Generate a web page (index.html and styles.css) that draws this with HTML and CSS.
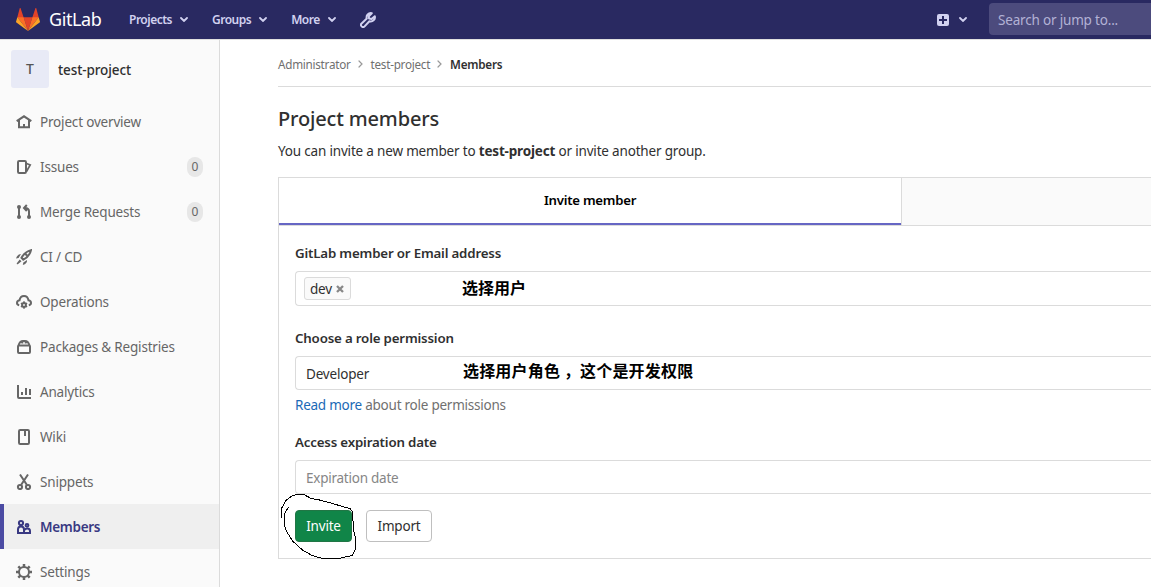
FILE: index.html
```html
<!DOCTYPE html>
<html lang="en">
<head>
<meta charset="utf-8">
<title>Members · test-project · GitLab</title>
<link rel="stylesheet" href="styles.css">
</head>
<body>
<div class="page">
<header class="navbar">
  <a class="brand">
    <svg class="tanuki" width="24" height="24" viewBox="0 0 36 36"><path fill="#e24329" d="M2 14l9.4 9v-9L7 .7c-.2-.7-1.200-.7-1.500 0z"/><path fill="#e24329" d="M34 14l-9.400 9v-9L29 .7c.2-.7 1.200-.7 1.500 0z"/><path fill="#e24329" d="M18 34.400L11.400 14h13.200z"/><path fill="#fc6d26" d="M18 34.400L11.400 14H2z"/><path fill="#fc6d26" d="M18 34.400L24.600 14H34z"/><path fill="#fca326" d="M2 14L.1 20.200c-.2.500 0 1.100.5 1.500L18 34.400z"/><path fill="#fca326" d="M34 14l1.900 6.200c.2.500 0 1.100-.5 1.500L18 34.400z"/></svg>
    <span class="wordmark">GitLab</span>
  </a>
  <nav class="menus">
    <a class="menu"><span>Projects</span><svg class="chev" width="8" height="5" viewBox="0 0 8 5"><path d="M1 1l3 3 3-3"/></svg></a>
    <a class="menu"><span>Groups</span><svg class="chev" width="8" height="5" viewBox="0 0 8 5"><path d="M1 1l3 3 3-3"/></svg></a>
    <a class="menu"><span>More</span><svg class="chev" width="8" height="5" viewBox="0 0 8 5"><path d="M1 1l3 3 3-3"/></svg></a>
    <svg class="wrench" width="16" height="16" viewBox="0 0 16 16"><path d="M11.800 1.200A4.200 4.200 0 0 0 6.800 6.600L1.600 11.400a2.100 2.100 0 1 0 3 3L9.400 9.200A4.200 4.200 0 0 0 14.800 4.200L11.500 7 9 6.500 8.800 4.200z"/></svg>
  </nav>
  <div class="create"><svg width="12" height="12" viewBox="0 0 12 12"><rect width="12" height="12" rx="2" fill="#d1d1f0"/><path d="M6 2v8M2 6h8" stroke="#292961" stroke-width="2"/></svg><svg class="chev" width="8" height="5" viewBox="0 0 8 5"><path d="M1 1l3 3 3-3"/></svg></div>
  <div class="search"><span>Search or jump to...</span></div>
</header>
<div class="body">
<aside class="sidebar">
  <div class="context"><div class="avatar">T</div><span>test-project</span></div>
  <a class="item"><svg class="ico" viewBox="0 0 16 16"><path d="M.7 7.200L8 2.300l7.300 4.900M3 6v7.300h10V6M8 13v-3"/></svg><span>Project overview</span></a>
  <a class="item"><svg class="ico" viewBox="0 0 16 16"><rect x="2" y="2" width="8" height="12" rx="1.200"/><path d="M10.500 4.500l3.700 1.500-3.700 6.500" stroke-width="1.700"/></svg><span>Issues</span><span class="badge">0</span></a>
  <a class="item"><svg class="ico" viewBox="0 0 16 16"><path d="M3 3v10M13 13V7.500Q13 4 9 4M10.800 1L8 4l2.800 3"/><g class="solid"><circle cx="3" cy="3" r="2"/><circle cx="3" cy="13" r="2"/><circle cx="13" cy="13" r="2"/></g></svg><span>Merge Requests</span><span class="badge">0</span></a>
  <a class="item"><svg class="ico" viewBox="0 0 16 16"><path d="M5.500 8.800Q9 2.500 15 1.100 13.800 7.200 7.300 10.700zM9.500 6.500l1.500-1.500"/><path class="solid" d="M5 5Q1.500 5 0 9.500l2.600-.5zM11 11q.5 3.500-4.200 5l.5-2.600zM3.700 10.500l1.800 1.800-3.700 2.900q-1.500.3-1-1z"/></svg><span>CI / CD</span></a>
  <a class="item"><svg class="ico" viewBox="0 0 16 16"><path d="M3.200 11.300Q1 10.800 1 9 1 6.700 3.500 6.300 4.300 2 8 2T12.500 6.300Q15 6.700 15 9 15 10.800 12.800 11.300"/><circle cx="8" cy="11" r="1.900"/><path d="M8 7.300v2M8 12.700v2M4.900 9.200l1.500.9M9.600 11.900l1.500.9M11.100 9.200l-1.500.9M6.400 11.900l-1.500.9" stroke-width="1.500"/></svg><span>Operations</span></a>
  <a class="item"><svg class="ico" viewBox="0 0 16 16"><rect x="2" y="6.500" width="12" height="7.500" rx="1"/><path d="M2.500 6.500Q3.800 2 7 2h2q3.200 0 4.500 4.500M6.300 2v2.500M9.700 2v2.500"/></svg><span>Packages &amp; Registries</span></a>
  <a class="item"><svg class="ico" viewBox="0 0 16 16"><path d="M2 1v12q0 1 1 1h12M6 8v3M10 4v7M14 5v6"/></svg><span>Analytics</span></a>
  <a class="item"><svg class="ico" viewBox="0 0 16 16"><rect x="3" y="1" width="10" height="14" rx="1.200"/><path d="M9 1v6"/></svg><span>Wiki</span></a>
  <a class="item"><svg class="ico" viewBox="0 0 16 16"><path d="M4 .5l6.800 10.300M12 .5L5.200 10.800"/><circle cx="4" cy="13" r="2.100"/><circle cx="12" cy="13" r="2.100"/></svg><span>Snippets</span></a>
  <a class="item active"><svg class="ico" viewBox="0 0 16 16"><circle cx="5" cy="4" r="2.100"/><path d="M2 14V10.500Q2 7.500 5 7.500T8 10.500V14zM8 14h6v-2q0-2.500-2.500-2.500Q9.500 9.500 8.500 11"/><circle cx="11" cy="6.300" r="1.400"/></svg><span>Members</span></a>
  <a class="item"><svg class="ico" viewBox="0 0 16 16"><circle cx="8" cy="8" r="5"/><path d="M8 0v3M8 13v3M0 8h3M13 8h3M2.300 2.300l2 2M11.700 11.700l2 2M13.700 2.300l-2 2M4.300 11.700l-2 2" stroke-width="2.500"/></svg><span>Settings</span></a>
</aside>
<main class="content">
  <div class="crumbs"><span>Administrator</span><svg class="sep" width="5" height="8" viewBox="0 0 5 8"><path d="M1 1l3 3-3 3"/></svg><span>test-project</span><svg class="sep" width="5" height="8" viewBox="0 0 5 8"><path d="M1 1l3 3-3 3"/></svg><span class="current">Members</span></div>
  <h1 class="title">Project members</h1>
  <p class="intro">You can invite a new member to <strong>test-project</strong> or invite another group.</p>
  <div class="tabs"><a class="tab selected"><span>Invite member</span></a><a class="tab"></a></div>
  <form class="panel">
    <label class="field-label">GitLab member or Email address</label>
    <div class="field users"><span class="token"><span>dev</span><svg width="8" height="8" viewBox="0 0 8 8"><path d="M1 1l6 6M7 1L1 7"/></svg></span><span class="note note-user">选择用户</span></div>
    <label class="field-label">Choose a role permission</label>
    <div class="field"><span>Developer</span><span class="note note-role">选择用户角色 ，这个是开发权限</span></div>
    <p class="help"><a>Read more</a> about role permissions</p>
    <label class="field-label">Access expiration date</label>
    <div class="field"><span class="placeholder">Expiration date</span></div>
    <div class="actions"><span class="btn invite"><span>Invite</span><svg class="scribble" width="90" height="76" viewBox="276 488 90 76"><path d="M281.500 518V508.500L286 500.500 291 496.500 296.500 494.500H304L311 498.500 317.500 499.500 329 502.500 342.500 506.500 350 508.500 352.500 512 353.500 530 355.500 538V549.500L352 555.500 345 557 338.500 558.500H322.500L312 555.500 302.500 550 292.500 541 287 532 284.500 526V514L288.500 507"/></svg></span><span class="btn import"><span>Import</span></span></div>
  </form>
</main>
</div>
</div>
</body>
</html>
```
FILE: styles.css
```css
* { box-sizing: border-box; }
body { margin: 0; background: #fff; color: #303030; font: 13.500px/20px "Noto Sans", "Noto Sans CJK SC", sans-serif; letter-spacing: -.18px; }
.page { width: 1151px; height: 587px; overflow: hidden; }
svg { display: block; flex: none; }
span, a, strong { white-space: nowrap; }
.navbar { height: 40px; background: #292961; border-bottom: 1px solid #dfdfdf; display: flex; align-items: center; padding-left: 16px; color: #d1d1f0; }
.brand { display: flex; align-items: center; width: 113px; gap: 9px; }
.wordmark { color: #fff; font-size: 18px; line-height: 24px; letter-spacing: -.4px; margin-top: -2px; }
.menus { display: flex; align-items: center; font-size: 12px; font-weight: 600; letter-spacing: -.5px; }
.menu { display: flex; align-items: center; gap: 8px; margin-right: 24px; }
.chev, .sep { fill: none; stroke: #d1d1f0; stroke-width: 1.800; stroke-linecap: round; }
.wrench { fill: none; stroke: #d1d1f0; stroke-width: 2; stroke-linejoin: round; }
.create { display: flex; align-items: center; gap: 10px; margin-left: auto; margin-right: 22px; }
.search { width: 162px; height: 32px; margin-top: -1px; border-radius: 4px 0 0 4px; background: #4c4b7d; padding: 7px 9px; color: #b3b2d5; }
.body { display: flex; height: 547px; }
.sidebar { width: 220px; flex: none; background: #fafafa; border-right: 1px solid #dbdbdb; overflow: hidden; }
.context { display: flex; align-items: center; gap: 9px; height: 59px; padding-left: 11px; font-weight: 500; letter-spacing: -.1px; }
.avatar { width: 38px; height: 38px; margin-top: -1px; background: #e8eaf6; border-radius: 3px; color: #555; display: grid; place-items: center; font-size: 14px; }
.item { height: 45px; display: flex; align-items: center; padding: 1px 16px 0; color: #666; }
.ico { width: 16px; height: 16px; margin-right: 8px; fill: none; stroke: currentColor; stroke-width: 2; }
.solid { fill: currentColor; stroke: none; }
.badge { margin-left: auto; height: 20px; width: 16px; border-radius: 8px; background: #e7e7e7; text-align: center; font-size: 12px; letter-spacing: 0; }
.active { background: #efefef; color: #393982; font-weight: 600; letter-spacing: -.3px; box-shadow: inset 4px 0 #4b4ba3; }
.content { flex: 1; min-width: 0; padding-left: 58px; overflow: hidden; }
.crumbs { height: 47px; border-bottom: 1px solid #dbdbdb; display: flex; align-items: center; padding-top: 1px; font-size: 11.700px; color: #707070; letter-spacing: -.26px; }
.sep { margin: 0 8px 0 7px; stroke: #999; stroke-width: 1.200; }
.current { font-weight: 600; color: #303030; }
.title { margin: 18px 0 0; font-size: 20px; line-height: 28px; font-weight: 500; letter-spacing: -.16px; }
.intro { margin: 8px 0 16px; }
.tabs { display: flex; height: 49px; border: 1px solid #dbdbdb; border-right: 0; background: #fafafa; }
.tab { display: grid; place-items: center; padding-bottom: 3px; }
.selected { width: 623px; background: #fff; border-right: 1px solid #dbdbdb; box-shadow: inset 0 -2px #6666c4; color: #000; font-size: 13.200px; font-weight: 600; letter-spacing: -.25px; }
.panel { height: 333px; border: 1px solid #dbdbdb; border-width: 0 0 1px 1px; padding: 17px 0 0 16px; }
.field-label { display: block; font-size: 13.300px; font-weight: 600; height: 20px; letter-spacing: -.18px; }
.field { height: 34px; border: 1px solid #dbdbdb; border-right: 0; border-radius: 4px 0 0 4px; display: flex; align-items: center; position: relative; margin-top: 8px; padding: 2px 0 0 10px; }
.users { height: 35px; padding: 0 0 0 8px; margin-bottom: 22px; }
.token { height: 23px; width: 47px; border: 1px solid #dbdbdb; background: #fafafa; border-radius: 3px; display: flex; align-items: center; gap: 4px; padding-left: 5px; }
.token svg { stroke: #888; stroke-width: 2.300; margin-top: 1px; }
.note { position: absolute; color: #000; font: 700 16px/20px "Noto Sans CJK SC", sans-serif; letter-spacing: .18px; }
.note-user { left: 166px; top: 5px; letter-spacing: 0; }
.note-role { left: 167px; top: 3px; }
.help { margin: 5px 0 17px; color: #707070; letter-spacing: -.24px; }
.help a { color: #1b69b6; }
.placeholder { color: #868686; letter-spacing: -.24px; }
.actions { display: flex; gap: 14px; margin-top: 16px; }
.btn { height: 32px; border: 1px solid #bfbfbf; border-radius: 4px; display: grid; place-items: center; position: relative; width: 66px; letter-spacing: -.2px; }
.invite { width: 57px; background: #108548; border-color: #217645; color: #fff; }
.scribble { position: absolute; left: -20px; top: -23px; fill: none; stroke: #000; stroke-width: 1; shape-rendering: crispEdges; }
```
